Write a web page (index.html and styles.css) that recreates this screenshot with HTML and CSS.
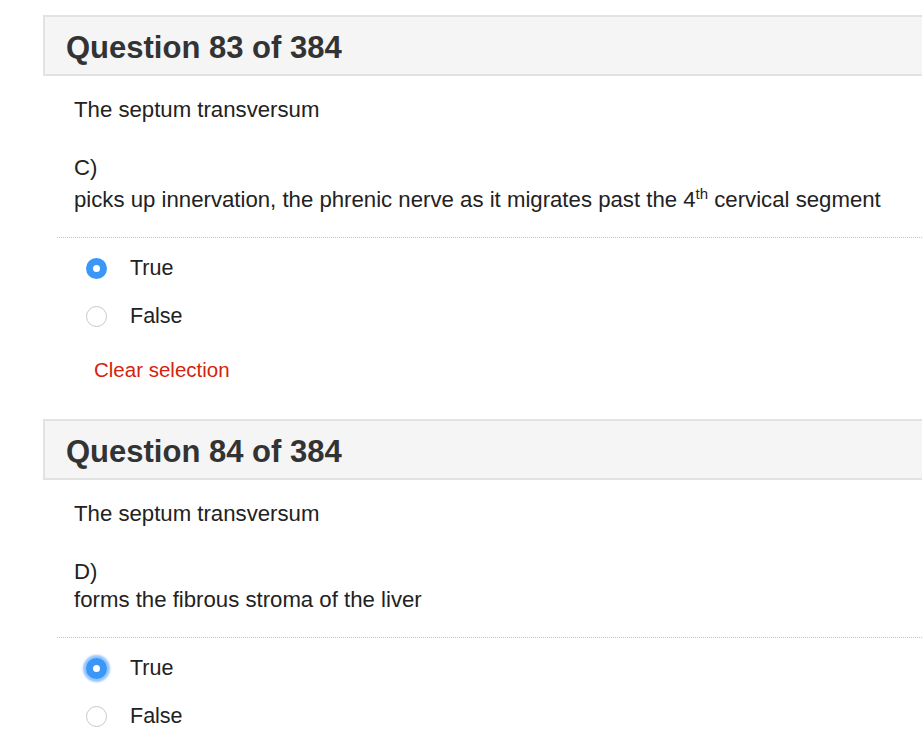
FILE: index.html
```html
<!DOCTYPE html>
<html>
<head>
<meta charset="utf-8">
<link rel="stylesheet" href="styles.css">
</head>
<body>
<div class="page">
  <section class="question">
    <div class="q-head"><h2 class="q-title">Question 83 of 384</h2></div>
    <div class="q-body">
      <p class="q-stem">The septum transversum</p>
      <p class="q-item">C)<br>picks up innervation, the phrenic nerve as it migrates past the 4<sup>th</sup> cervical segment</p>
    </div>
    <div class="q-rule"></div>
    <div class="q-options">
      <label class="option"><span class="radio checked"></span><span class="opt-label">True</span></label>
      <label class="option"><span class="radio"></span><span class="opt-label">False</span></label>
    </div>
    <a class="clear">Clear selection</a>
  </section>
  <section class="question">
    <div class="q-head"><h2 class="q-title">Question 84 of 384</h2></div>
    <div class="q-body">
      <p class="q-stem">The septum transversum</p>
      <p class="q-item">D)<br>forms the fibrous stroma of the liver</p>
    </div>
    <div class="q-rule"></div>
    <div class="q-options">
      <label class="option"><span class="radio checked focused"></span><span class="opt-label">True</span></label>
      <label class="option"><span class="radio"></span><span class="opt-label">False</span></label>
    </div>
    <a class="clear">Clear selection</a>
  </section>
</div>
</body>
</html>
```
FILE: styles.css
```css
html, body {
  margin: 0;
  padding: 0;
  background: #fff;
  overflow: hidden;
}
body {
  font-family: "Liberation Sans", Arial, Helvetica, sans-serif;
  color: #222;
}
.page {
  padding-left: 43px;
  padding-top: 15px;
  margin-right: -40px;
}
.question {
  display: flex;
  flex-direction: column;
  margin-bottom: 34px;
}
.q-head {
  box-sizing: border-box;
  height: 61px;
  background: #f5f5f5;
  border: 2px solid #e2e2e2;
  display: flex;
  align-items: center;
  padding-left: 21px;
  padding-top: 3px;
}
.q-title {
  margin: 0;
  font-size: 31px;
  font-weight: bold;
  color: #333;
  line-height: 1;
}
.q-body {
  padding-left: 31px;
  margin-top: 19px;
  font-size: 22.2px;
  line-height: 30px;
}
.q-stem {
  margin: 0 0 29px 0;
}
.q-item {
  margin: 0;
  line-height: 28px;
}
.q-item sup {
  display: inline-block;
  font-size: 15px;
  line-height: 15px;
  vertical-align: 8px;
  padding-top: 4px;
}
.q-rule {
  margin-left: 14px;
  margin-top: 23px;
  border-top: 1px dotted #c4c4c4;
  height: 0;
}
.q-options {
  display: flex;
  flex-direction: column;
  margin-top: 6px;
}
.option {
  display: flex;
  align-items: center;
  height: 48px;
  padding-left: 43px;
  font-size: 21.5px;
}
.radio {
  box-sizing: border-box;
  width: 21px;
  height: 21px;
  border-radius: 50%;
  border: 1px solid #c8c8c8;
  background: #fff;
  display: flex;
  align-items: center;
  justify-content: center;
}
.radio.checked {
  border: none;
  background: #3a96f7;
}
.radio.checked::after {
  content: "";
  width: 7px;
  height: 7px;
  border-radius: 50%;
  background: #fff;
}
.radio.focused {
  box-shadow: 0 0 2px 3px rgba(58, 150, 247, 0.55);
}
.opt-label {
  margin-left: 23px;
}
.clear {
  margin-top: 15px;
  margin-left: 51px;
  font-size: 20.5px;
  line-height: 30px;
  color: #d4230c;
}
```
